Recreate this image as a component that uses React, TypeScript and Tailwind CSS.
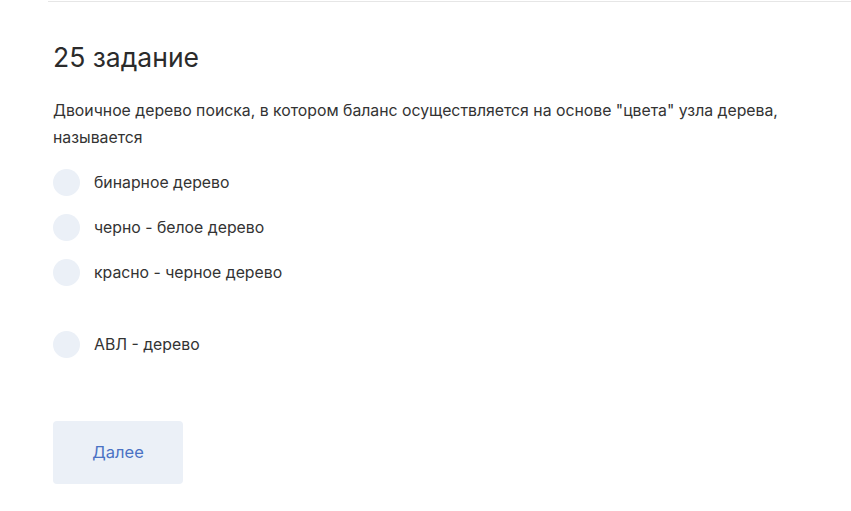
export default function App() {
  const options = ['бинарное дерево', 'черно - белое дерево', 'красно - черное дерево']
  return (
    <div className="min-h-[511px] w-[851px] bg-white font-['Inter',sans-serif] text-[#333333]">
      <div className="ml-[48px] h-px translate-y-[1px] bg-[#e6e6e6]" />
      <div className="px-[53px] pt-[40px]">
        <h2 className="text-[26.5px] leading-[32px] text-[#2b2b2b]">25 задание</h2>
        <p className="mt-[24px] text-[15.8px] leading-[27px]">
          Двоичное дерево поиска, в котором баланс осуществляется на основе "цвета" узла дерева, называется
        </p>
        <div className="mt-[18px] flex flex-col gap-[18px]">
          {options.map((o) => (
            <Option key={o} label={o} />
          ))}
          <div className="mt-[27px]">
            <Option label="АВЛ - дерево" />
          </div>
        </div>
        <button
          type="button"
          className="mt-[63px] h-[63px] w-[130px] rounded-[4px] bg-[#ebf0f7] text-[16.5px] text-[#4a72c4]"
        >
          Далее
        </button>
      </div>
    </div>
  )
}

function Option({ label }: { label: string }) {
  return (
    <label className="flex h-[27px] items-center gap-[14px] text-[15.8px]">
      <span className="h-[27px] w-[27px] shrink-0 rounded-full bg-[#ebf0f7]" />
      {label}
    </label>
  )
}
